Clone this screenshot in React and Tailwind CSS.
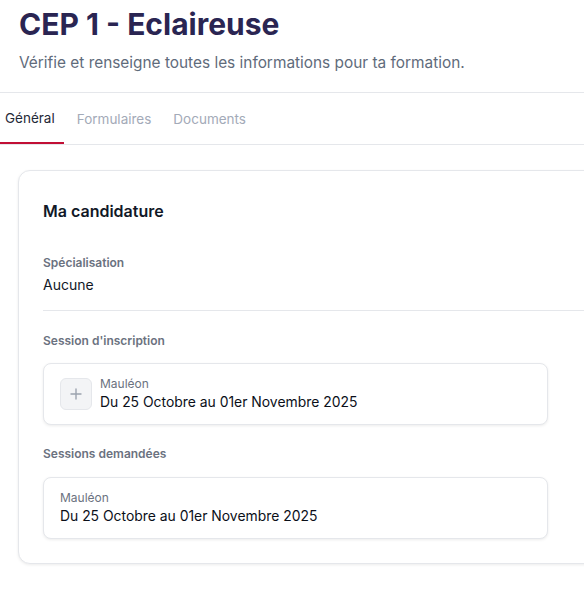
import React from "react";

function SessionBox({ withIcon }) {
  return (
    <div className="w-[505px] flex items-center gap-2 rounded-lg border border-gray-200 bg-white px-4 py-3 shadow-[0_1px_3px_rgba(0,0,0,0.08)]">
      {withIcon && (
        <div className="flex h-8 w-8 shrink-0 items-center justify-center rounded-md border border-gray-200 bg-gray-100">
          <svg width="12" height="12" viewBox="0 0 12 12" fill="none">
            <path d="M6 1v10M1 6h10" stroke="#9ca3af" strokeWidth="1.4" strokeLinecap="round" />
          </svg>
        </div>
      )}
      <div className="flex flex-col">
        <span className="text-[12px] leading-[16px] text-[#6b7280]">Mauléon</span>
        <span className="text-[13.9px] leading-[20px] font-normal text-[#0b0f19]">
          Du 25 Octobre au 01er Novembre 2025
        </span>
      </div>
    </div>
  );
}

export default function App() {
  return (
    <div className="w-[584px] h-[598px] overflow-hidden bg-white" style={{ fontFamily: "Inter, 'Noto Sans', sans-serif" }}>
      <div className="px-[19px] pt-[6px] pb-[17px] border-b border-gray-200">
        <h1 className="text-[30px] leading-[36px] font-bold text-[#2a2552]">CEP 1 - Eclaireuse</h1>
        <p className="mt-[9px] text-[15.4px] leading-[24px] text-[#5f6b7b]">
          Vérifie et renseigne toutes les informations pour ta formation.
        </p>
      </div>
      <div className="flex gap-[8px] border-b border-gray-200 pt-[1px]">
        <div className="flex h-[50px] items-center pl-[5px] pr-[9px] border-b-2 border-[#c10f35] text-[13.5px] text-[#1f2937]">
          Général
        </div>
        <div className="flex h-[50px] items-center pl-[5px] pr-[9px] text-[13.5px] text-[#a3aab8]">Formulaires</div>
        <div className="flex h-[50px] items-center pl-[5px] pr-[9px] text-[13.5px] text-[#a3aab8]">Documents</div>
      </div>
      <div className="ml-[18px] mt-[25px] w-[640px] rounded-xl border border-gray-200 bg-white px-6 pt-[28px] pb-6 shadow-[0_1px_3px_rgba(0,0,0,0.08)]">
        <h2 className="text-[16px] leading-[24px] font-semibold text-[#111827]">Ma candidature</h2>
        <div className="mt-[32px] text-[12px] leading-[16px] font-semibold text-[#6b7280]">Spécialisation</div>
        <div className="mt-[4px] text-[14px] leading-[20px] text-[#111827]">Aucune</div>
        <div className="mt-[15px] border-t border-gray-200" />
        <div className="mt-[22px] text-[12px] leading-[16px] font-semibold text-[#6b7280]">Session d'inscription</div>
        <div className="mt-[14px]">
          <SessionBox withIcon />
        </div>
        <div className="mt-[21px] text-[12px] leading-[16px] font-semibold text-[#6b7280]">Sessions demandées</div>
        <div className="mt-[15px]">
          <SessionBox />
        </div>
      </div>
    </div>
  );
}
